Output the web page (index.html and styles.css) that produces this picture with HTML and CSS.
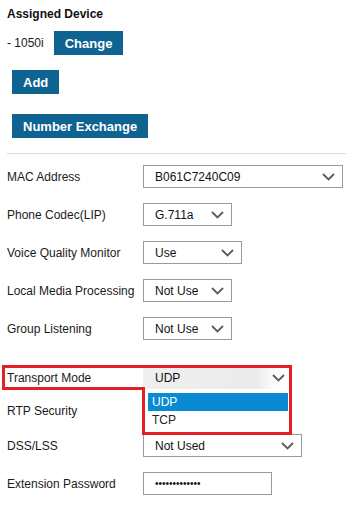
FILE: index.html
```
<html>
	<head>
		<title>Extension Settings</title>
		<link rel="stylesheet" href="styles.css">
	</head>
	<body>
		<div class="page">
			<h3 class="section-title">Assigned Device</h3>
			<div class="device-row">
				<span class="device-name">- 1050i</span>
				<button class="btn">Change</button>
			</div>
			<div class="btn-row"><button class="btn">Add</button></div>
			<div class="btn-row btn-row-last"><button class="btn">Number Exchange</button></div>
			<hr class="divider">

			<div class="form">
				<div class="field">
					<label class="field-label">MAC Address</label>
					<div class="select select-mac">
						<span>B061C7240C09</span>
						<svg class="chevron" width="13" height="8" viewBox="0 0 13 8"><polyline points="1,1 6.5,6.5 12,1"/></svg>
					</div>
				</div>
				<div class="field">
					<label class="field-label">Phone Codec(LIP)</label>
					<div class="select select-sm">
						<span>G.711a</span>
						<svg class="chevron" width="13" height="8" viewBox="0 0 13 8"><polyline points="1,1 6.5,6.5 12,1"/></svg>
					</div>
				</div>
				<div class="field">
					<label class="field-label">Voice Quality Monitor</label>
					<div class="select select-md">
						<span>Use</span>
						<svg class="chevron" width="13" height="8" viewBox="0 0 13 8"><polyline points="1,1 6.5,6.5 12,1"/></svg>
					</div>
				</div>
				<div class="field">
					<label class="field-label">Local Media Processing</label>
					<div class="select select-sm">
						<span>Not Use</span>
						<svg class="chevron" width="13" height="8" viewBox="0 0 13 8"><polyline points="1,1 6.5,6.5 12,1"/></svg>
					</div>
				</div>
				<div class="field">
					<label class="field-label">Group Listening</label>
					<div class="select select-sm">
						<span>Not Use</span>
						<svg class="chevron" width="13" height="8" viewBox="0 0 13 8"><polyline points="1,1 6.5,6.5 12,1"/></svg>
					</div>
				</div>

				<div class="field field-transport">
					<label class="field-label">Transport Mode</label>
					<div class="select select-open">
						<span>UDP</span>
						<svg class="chevron" width="13" height="8" viewBox="0 0 13 8"><polyline points="1,1 6.5,6.5 12,1"/></svg>
						<ul class="dropdown">
							<li class="option option-active">UDP</li>
							<li class="option">TCP</li>
						</ul>
					</div>
				</div>
				<div class="field field-rtp">
					<label class="field-label">RTP Security</label>
				</div>
				<div class="field field-dss">
					<label class="field-label">DSS/LSS</label>
					<div class="select select-lg">
						<span>Not Used</span>
						<svg class="chevron" width="13" height="8" viewBox="0 0 13 8"><polyline points="1,1 6.5,6.5 12,1"/></svg>
					</div>
				</div>
				<div class="field">
					<label class="field-label">Extension Password</label>
					<input class="text-input" type="password" value="1234567890123">
				</div>
			</div>

			<!-- red annotation around the transport mode field -->
			<svg class="callout" width="296" height="76" viewBox="0 0 296 76">
				<polygon points="3.5,3.5 290.5,3.5 290.5,70.5 143.5,70.5 143.5,25.5 3.5,25.5"/>
			</svg>
		</div>
	</body>
</html>
```

FILE: styles.css
```
body{
	margin: 0;
	font-family: 'Liberation Sans', Arial, sans-serif;
	font-size: 12px;
	color: #1a1a1a;
	background-color: white;
}
.page{
	position: relative;
	padding: 7px 0 0 7px;
	height: 502px;
}
.section-title{
	margin: 0;
	font-size: 12px;
	line-height: 14px;
	font-weight: bold;
	color: #111;
}
.device-row{
	display: flex;
	align-items: center;
	gap: 10px;
	margin-top: 10px;
}
.btn-row{
	margin: 15px 0 0 5px;
}
.btn-row-last{
	margin-top: 20px;
}
.btn{
	height: 24px;
	padding: 0 11px;
	border: 0;
	border-radius: 0;
	background-color: #0e6390;
	color: white;
	font-family: 'Liberation Sans', Arial, sans-serif;
	font-size: 13px;
	font-weight: bold;
	display: block;
}
.divider{
	margin: 15px 0 0;
	height: 0;
	border: 0;
	border-top: 1px solid #dddddd;
}
.form{
	padding-top: 11px;
}
.field{
	display: flex;
	align-items: center;
	height: 23px;
	margin-top: 15px;
}
.field:first-child{
	margin-top: 0;
}
.field-transport{
	margin-top: 26px;
}
.field-rtp{
	margin-top: 10px;
}
.field-dss{
	margin-top: 12px;
}
.field-label{
	flex: 0 0 136px;
	line-height: 14px;
}
.select{
	position: relative;
	box-sizing: border-box;
	height: 23px;
	display: flex;
	align-items: center;
	justify-content: space-between;
	padding: 0 7px 0 11px;
	border: 1px solid #9a9a9a;
	background-color: white;
	color: #111;
}
.select-mac{
	width: 200px;
}
.select-sm{
	width: 89px;
}
.select-md{
	width: 99px;
}
.select-lg{
	width: 159px;
}
.select-open{
	width: 147px;
	border: 0;
	padding: 0 5px 0 12px;
	background: linear-gradient(to right, #efefef 0%, #ebebeb 78%, #fbfbfb 88%, #ffffff 100%);
}
.chevron{
	flex: 0 0 13px;
}
.chevron polyline{
	fill: none;
	stroke: #5c5c5c;
	stroke-width: 1.8;
}
.dropdown{
	position: absolute;
	top: 27px;
	left: 5px;
	width: 140px;
	margin: 0;
	padding: 0;
	list-style: none;
	background-color: white;
	z-index: 2;
}
.option{
	height: 18px;
	line-height: 18px;
	padding-left: 4px;
	color: #222;
}
.option-active{
	background-color: #0a8ad2;
	color: white;
}
.text-input{
	box-sizing: border-box;
	width: 129px;
	height: 23px;
	padding: 0 11px;
	border: 1px solid #9a9a9a;
	border-radius: 0;
	font-family: 'Liberation Sans', Arial, sans-serif;
	font-size: 10px;
	color: #111;
	outline: 0;
}
.callout{
	position: absolute;
	left: 0;
	top: 363px;
	z-index: 3;
}
.callout polygon{
	fill: none;
	stroke: #e41f26;
	stroke-width: 3;
}
```
